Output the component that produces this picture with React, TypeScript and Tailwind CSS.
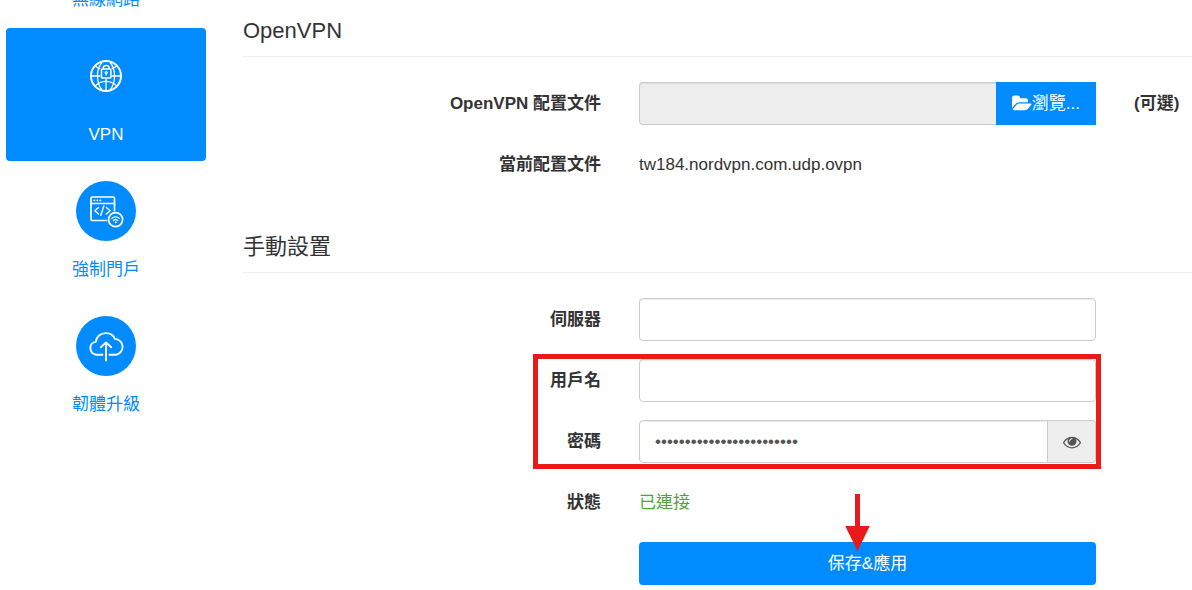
import { useState, type ReactNode } from "react";

function WifiIcon() {
  return (
    <g fill="none" stroke="currentColor" strokeWidth="2" strokeLinecap="round">
      <path d="M16 26a20 20 0 0 1 28 0M21 31a13 13 0 0 1 18 0M26 36a6 6 0 0 1 8 0" />
      <circle cx="30" cy="41" r="1" />
    </g>
  );
}

function GlobeLockIcon() {
  return (
    <g fill="none" stroke="currentColor" strokeWidth="1.3">
      <circle cx="30" cy="30" r="15" strokeWidth="2" />
      <path d="M26.2 16c-6.3 7-6.3 21 0 28.300M33.8 16c6.3 7 6.3 21 0 28.300" />
      <path d="M15 30h9.500M35.500 30H45M30 33V45" />
      <path d="M19 19.500c1.500 1.600 3.200 2.700 5.200 3.400M41 19.500c-1.500 1.600-3.200 2.700-5.200 3.400M19 40c3-2.800 6.800-4.600 11-4.600s8 1.800 11 4.600" />
      <rect x="25.500" y="23" width="9.400" height="9" rx="0.800" strokeWidth="1.500" />
      <path d="M27.200 23v-1a3 2.600 0 0 1 6 0v1" strokeWidth="1.500" />
      <circle cx="30.200" cy="26.600" r="1" />
      <path d="M30.200 27.600v2" />
    </g>
  );
}

function PortalIcon() {
  return (
    <g fill="none" stroke="currentColor" strokeWidth="1.700" strokeLinecap="round" strokeLinejoin="round">
      <rect x="15" y="16" width="23.500" height="23.500" rx="1.200" />
      <path d="M15 22.500h23.500" />
      <path d="M18.300 19.400h.1M21.300 19.400h.1M24.300 19.400h.1" strokeWidth="1.800" />
      <path d="M22.500 26.500l-3.700 3.300 3.700 3.300M27.800 25l-3 9.300M30.300 26.500l3.900 3.300-3.900 3.300" strokeWidth="1.400" />
      <circle cx="39.600" cy="38.600" r="8.600" fill="#008cff" stroke="none" />
      <circle cx="39.600" cy="38.600" r="7" />
      <path d="M35.800 37.400a5.400 5.400 0 0 1 7.600 0M37.500 39.500a3 3 0 0 1 4.200 0" strokeWidth="1.300" />
      <circle cx="39.600" cy="41.300" r="0.500" strokeWidth="1" />
    </g>
  );
}

function CloudUploadIcon() {
  return (
    <g fill="none" stroke="currentColor" strokeWidth="1.900" strokeLinecap="round" strokeLinejoin="round">
      <path d="M26.500 38.700H20.500a6.600 6.600 0 0 1-.6-13.100c.4-4.900 4.700-8.500 9.800-8.500 4.200 0 7.800 2.200 9.300 5.800a8 8 0 0 1 1.300 15.800H33.500" />
      <path d="M30 44.500V26.600M24.800 31.200l5.200-4.800 5.200 4.800" />
    </g>
  );
}

type NavItem = { label: string; icon: ReactNode; active?: boolean };

const navItems: NavItem[] = [
  { label: "無線網路", icon: <WifiIcon /> },
  { label: "VPN", icon: <GlobeLockIcon />, active: true },
  { label: "強制門戶", icon: <PortalIcon /> },
  { label: "韌體升級", icon: <CloudUploadIcon /> },
];

function Sidebar() {
  return (
    <nav className="-mt-[107px] flex w-[200px] shrink-0 flex-col gap-[2px]">
      {navItems.map((item) => (
        <a
          key={item.label}
          href="#"
          aria-current={item.active ? "page" : undefined}
          className={
            item.active
              ? "flex flex-col items-center gap-[17px] rounded bg-[#008cff] pt-[18px] pb-[14px] text-white"
              : "flex flex-col items-center gap-[17px] rounded pt-[18px] pb-[14px] text-[#008cff]"
          }
        >
          <span className="size-[60px] rounded-full bg-[#008cff] text-white">
            <svg viewBox="0 0 60 60" className="size-full" aria-hidden="true">
              {item.icon}
            </svg>
          </span>
          <span className="leading-6">{item.label}</span>
        </a>
      ))}
    </nav>
  );
}

const formColumns = "grid grid-cols-[minmax(0,358fr)_minmax(0,457fr)_minmax(0,58fr)] gap-x-[38px]";
const inputBox =
  "h-[43px] w-full min-w-0 border border-[#ccc] px-[15px] text-[#555] shadow-[inset_0_1px_1px_rgba(0,0,0,0.075)] outline-none";

function Row({ label, htmlFor, note, children }: { label?: string; htmlFor?: string; note?: string; children: ReactNode }) {
  return (
    <div className={`${formColumns} min-h-[43px] items-center`}>
      {htmlFor ? (
        <label htmlFor={htmlFor} className="text-right font-bold">
          {label}
        </label>
      ) : (
        <span className="text-right font-bold">{label}</span>
      )}
      {children}
      {note && <span className="font-bold whitespace-nowrap">{note}</span>}
    </div>
  );
}

function SectionTitle({ children }: { children: ReactNode }) {
  return <h2 className="border-b border-[#eee] pb-[13px] text-[22px] leading-6">{children}</h2>;
}

export default function App() {
  const [server, setServer] = useState("");
  const [user, setUser] = useState("");
  const [password, setPassword] = useState("abcdefghijklmnopqrstuvwx");
  const [visible, setVisible] = useState(false);

  return (
    <div className="flex gap-[37px] overflow-hidden bg-white pl-[6px] font-['Liberation_Sans','Noto_Sans_CJK_TC',sans-serif] text-[17px] leading-6 text-[#333]">
      <Sidebar />
      <main className="flex min-w-0 flex-1 flex-col gap-[49px] pt-[19px] pb-[5px]">
        <section className="flex flex-col gap-[25px]">
          <SectionTitle>OpenVPN</SectionTitle>
          <div className="flex flex-col gap-[18px]">
            <Row label="OpenVPN 配置文件" htmlFor="config" note="(可選)">
              <div className="flex">
                <input id="config" type="text" readOnly className={`${inputBox} flex-1 rounded-l border-r-0 bg-[#eee]`} />
                <button type="button" className="flex h-[43px] shrink-0 items-center bg-[#008cff] px-4 text-white">
                  <svg viewBox="0 0 1920 1792" className="h-[19px] w-[20px]" fill="currentColor" aria-hidden="true">
                    <path d="M1879 952q0 31-31 66l-336 396q-43 51-120.500 86.500t-143.500 35.500h-1088q-34 0-60.500-13t-26.500-43q0-31 31-66l336-396q43-51 120.500-86.500t143.500-35.500h1088q34 0 60.500 13t26.500 43zm-343-344v160h-832q-94 0-197 47.500t-164 119.500l-337 396-5 6q0-4-.5-12.500t-.5-12.500v-960q0-92 66-158t158-66h320q92 0 158 66t66 158v32h544q92 0 158 66t66 158z" />
                  </svg>
                  瀏覽...
                </button>
              </div>
            </Row>
            <Row label="當前配置文件">
              <span>tw184.nordvpn.com.udp.ovpn</span>
            </Row>
          </div>
        </section>

        <section className="flex flex-col gap-[25px]">
          <SectionTitle>手動設置</SectionTitle>
          <form className="flex flex-col gap-[18px]" onSubmit={(e) => e.preventDefault()}>
            <Row label="伺服器" htmlFor="server">
              <input id="server" type="text" value={server} onChange={(e) => setServer(e.target.value)} className={`${inputBox} rounded`} />
            </Row>
            <div className="relative flex flex-col gap-[18px]">
              <Row label="用戶名" htmlFor="user">
                <input id="user" type="text" value={user} onChange={(e) => setUser(e.target.value)} className={`${inputBox} rounded`} />
              </Row>
              <Row label="密碼" htmlFor="password">
                <div className="flex">
                  <input
                    id="password"
                    type={visible ? "text" : "password"}
                    autoComplete="off"
                    value={password}
                    onChange={(e) => setPassword(e.target.value)}
                    className={`${inputBox} flex-1 rounded-l`}
                  />
                  <button
                    type="button"
                    aria-label="密碼"
                    aria-pressed={visible}
                    onClick={() => setVisible(!visible)}
                    className="flex h-[43px] w-12 shrink-0 items-center justify-center rounded-r border border-l-0 border-[#ccc] bg-[#eee] text-[#555]"
                  >
                    <svg viewBox="0 0 1792 1792" className="size-[18px]" fill="currentColor" aria-hidden="true">
                      <path d="M1664 960q-152-236-381-353 61 104 61 225 0 185-131.500 316.500t-316.500 131.500-316.500-131.500-131.500-316.500q0-121 61-225-229 117-381 353 133 205 333.500 326.500t434.500 121.500 434.500-121.500 333.500-326.500zm-720-384q0-20-14-34t-34-14q-125 0-214.500 89.500t-89.500 214.500q0 20 14 34t34 14 34-14 14-34q0-86 61-147t147-61q20 0 34-14t14-34zm848 384q0 34-20 69-140 230-376.500 368.500t-499.500 138.500-499.500-139-376.500-368q-20-35-20-69t20-69q140-229 376.500-368t499.500-139 499.500 139 376.500 368q20 35 20 69z" />
                    </svg>
                  </button>
                </div>
              </Row>
              <div className={`${formColumns} pointer-events-none absolute inset-x-0 -top-[5px] -bottom-[6px]`}>
                <div className="col-span-2 -mr-[5px] ml-[290px] border-[5px] border-[#e81a1a]" />
              </div>
            </div>
            <Row label="狀態">
              <span className="text-[#4da639]">已連接</span>
            </Row>
            <Row>
              <div className="relative">
                <button type="submit" className="h-[43px] w-full rounded bg-[#008cff] text-white">
                  保存&amp;應用
                </button>
                <svg
                  viewBox="0 0 25 58"
                  className="pointer-events-none absolute -top-[49px] left-1/2 -ml-[23px] h-[58px] w-[25px]"
                  fill="#e81a1a"
                  aria-hidden="true"
                >
                  <path d="M10 1h5v32h9.800L12.500 58 .2 33H10z" />
                </svg>
              </div>
            </Row>
          </form>
        </section>
      </main>
    </div>
  );
}
